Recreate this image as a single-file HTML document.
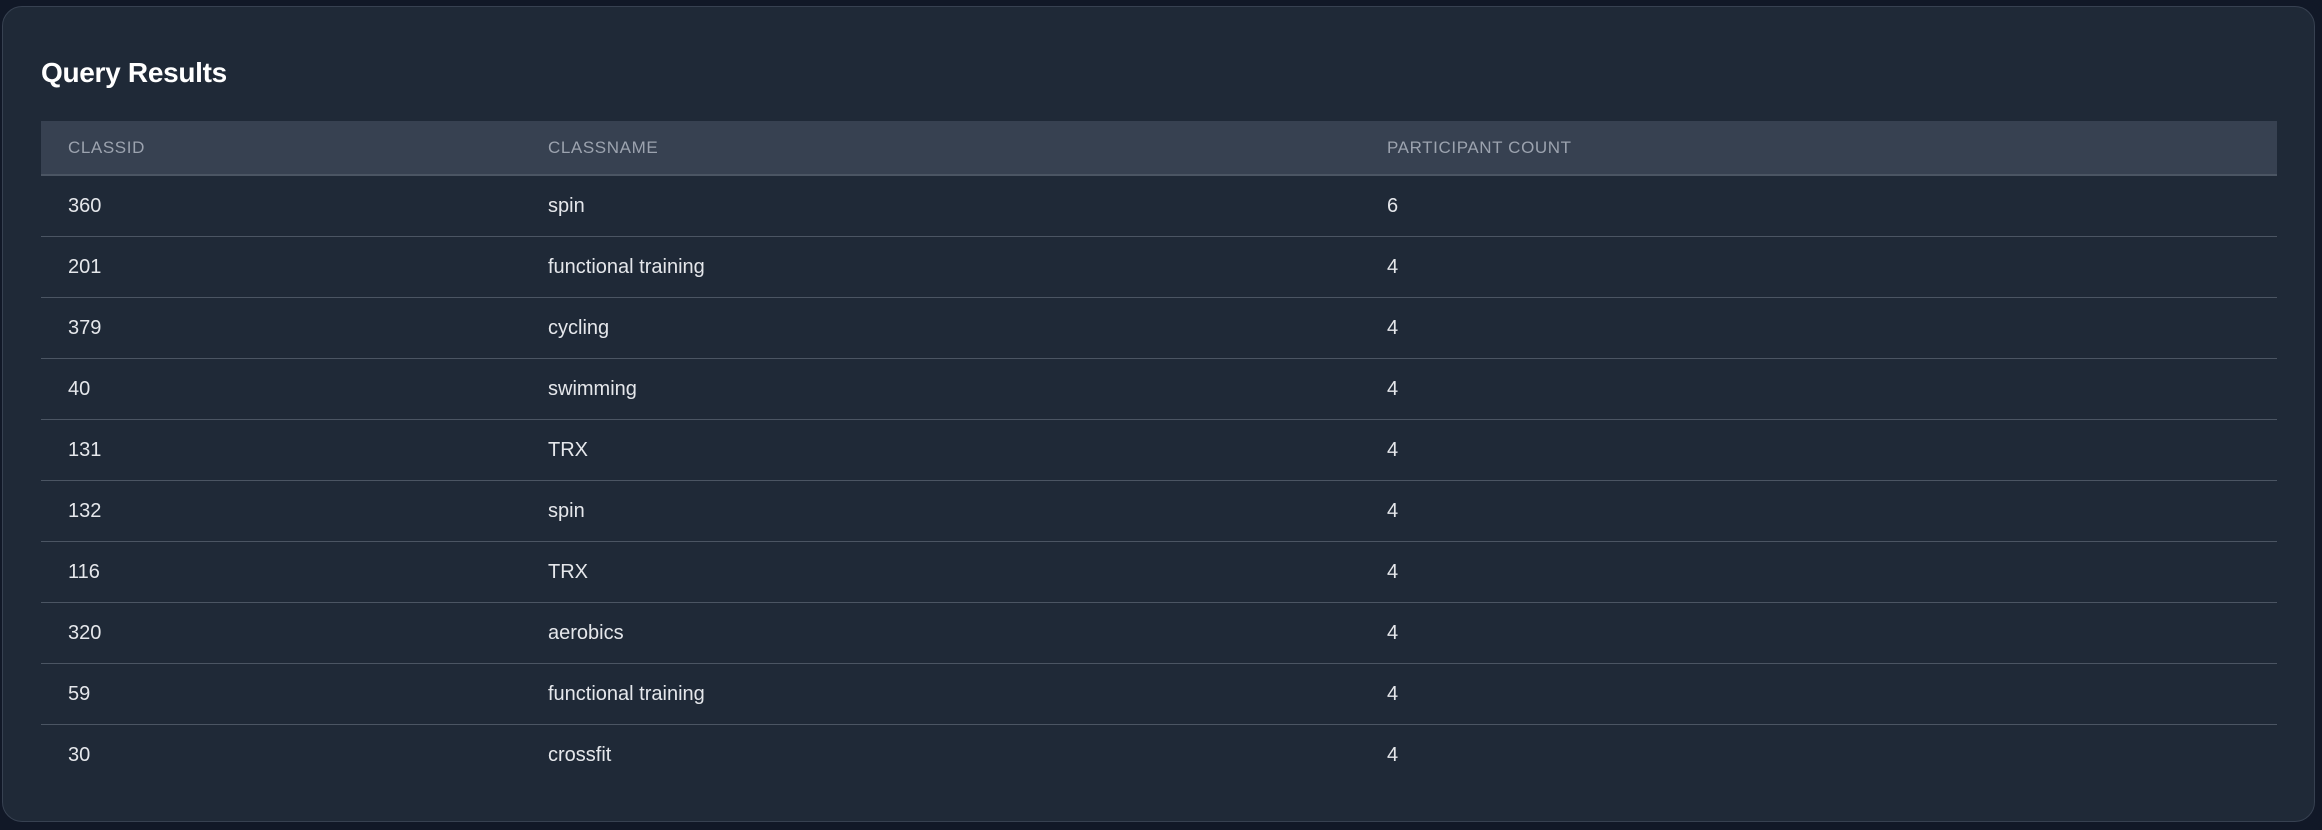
<!DOCTYPE html>
<html><head><style>
html,body{margin:0;padding:0;}
body{width:2322px;height:830px;background:#111827;font-family:"Liberation Sans",sans-serif;position:relative;overflow:hidden;}
.card{position:absolute;left:2px;top:6px;width:2313px;height:816px;background:#1f2937;border:1px solid #374151;border-radius:20px;box-sizing:border-box;}
h2{position:absolute;left:38px;top:50px;margin:0;font-size:28px;font-weight:bold;color:#fff;letter-spacing:-0.3px;}
table{position:absolute;left:38px;top:114px;width:2236px;border-collapse:collapse;}
th{height:53px;background:#374151;color:#9ca3af;font-size:17px;font-weight:normal;text-align:left;letter-spacing:0.6px;padding:0 0 0 27px;border-bottom:2px solid #4b5563;}
td{height:60px;color:#e5e7eb;font-size:20px;padding:0 0 0 27px;border-bottom:1px solid #4b5563;}
tr:last-child td{border-bottom:none;}
</style></head><body>
<div class="card">
<h2>Query Results</h2>
<table>
<tr><th style="width:453px">CLASSID</th><th style="width:812px">CLASSNAME</th><th>PARTICIPANT COUNT</th></tr>
<tr><td>360</td><td>spin</td><td>6</td></tr>
<tr><td>201</td><td>functional training</td><td>4</td></tr>
<tr><td>379</td><td>cycling</td><td>4</td></tr>
<tr><td>40</td><td>swimming</td><td>4</td></tr>
<tr><td>131</td><td>TRX</td><td>4</td></tr>
<tr><td>132</td><td>spin</td><td>4</td></tr>
<tr><td>116</td><td>TRX</td><td>4</td></tr>
<tr><td>320</td><td>aerobics</td><td>4</td></tr>
<tr><td>59</td><td>functional training</td><td>4</td></tr>
<tr><td>30</td><td>crossfit</td><td>4</td></tr>
</table>
</div>
</body></html>
